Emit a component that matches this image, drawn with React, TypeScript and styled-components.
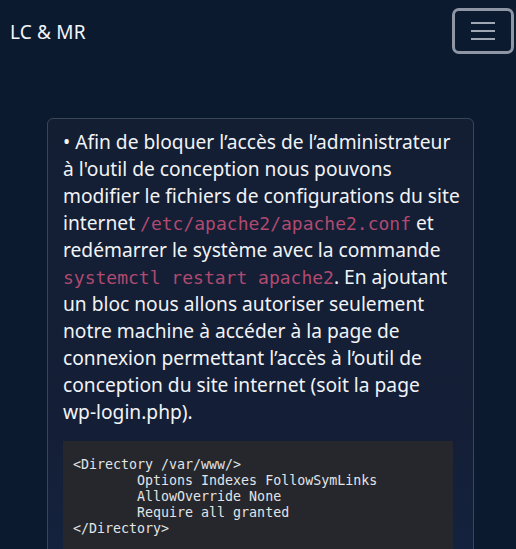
import React from "react";
import styled, { createGlobalStyle } from "styled-components";

const Global = createGlobalStyle`
  html, body { margin: 0; padding: 0; background: #0c1a30; }
  body { font-family: "Noto Sans", "Open Sans", sans-serif; color: #f1f3f6; }
  * { box-sizing: border-box; }
`;

const Page = styled.div`
  min-height: 549px;
  background: #0c1a30;
  overflow: hidden;
`;

const NavBar = styled.nav`
  height: 64px;
  display: flex;
  align-items: center;
  justify-content: space-between;
  padding: 0 2px 0 10px;
`;

const Brand = styled.div`
  font-size: 19px;
  color: #f4f6f9;
  letter-spacing: 0.2px;
`;

const Toggler = styled.button`
  width: 62px;
  height: 46px;
  margin-top: -3px;
  border: 3px solid #8e96a6;
  border-radius: 7px;
  background: transparent;
  display: flex;
  align-items: center;
  justify-content: center;
  padding: 0;
`;

const Main = styled.main`
  padding: 54px 42px 0 47px;
`;

const Card = styled.section`
  background: linear-gradient(180deg, #141e33 0%, #141f37 70%, #15233f 100%);
  border: 1px solid #3a4558;
  border-radius: 6px;
  padding: 9px 10px 0 15px;
`;

const Para = styled.p`
  margin: 0;
  font-size: 19.2px;
  line-height: 27px;
  color: #f1f3f6;
`;

const NoWrap = styled.span`
  white-space: nowrap;
`;

const InlineCode = styled.code`
  font-family: "DejaVu Sans Mono", "Liberation Mono", monospace;
  font-size: 18px;
  line-height: 1;
  color: #b04a70;
`;

const Pre = styled.pre`
  margin: 16px 10px 0 0;
  background: #25272c;
  padding: 16px 10px 40px;
  font-family: "DejaVu Sans Mono", "Liberation Mono", monospace;
  font-size: 13.3px;
  line-height: 16px;
  color: #e2e4e7;
`;

export default function App() {
  return (
    <Page>
      <Global />
      <NavBar>
        <Brand>LC &amp; MR</Brand>
        <Toggler aria-label="menu">
          <svg width="24" height="20" viewBox="0 0 24 20">
            <g stroke="#a0a7b4" strokeWidth="2">
              <line x1="0" y1="2" x2="24" y2="2" />
              <line x1="0" y1="10" x2="24" y2="10" />
              <line x1="0" y1="18" x2="24" y2="18" />
            </g>
          </svg>
        </Toggler>
      </NavBar>
      <Main>
        <Card>
          <Para>
            • Afin de bloquer l’accès de l’administrateur à l'outil de conception nous pouvons
            modifier le fichiers de configurations du site internet{" "}
            <InlineCode>/etc/apache2/apache2.conf</InlineCode> et redémarrer le système avec la
            commande <InlineCode>systemctl restart apache2</InlineCode>. En ajoutant un bloc nous
            allons autoriser seulement notre machine à accéder à la page de connexion permettant
            l’accès à l’outil de conception du site internet (soit la page{" "}
            <NoWrap>wp-login.php</NoWrap>).
          </Para>
          <Pre>{`<Directory /var/www/>
        Options Indexes FollowSymLinks
        AllowOverride None
        Require all granted
</Directory>`}</Pre>
        </Card>
      </Main>
    </Page>
  );
}
